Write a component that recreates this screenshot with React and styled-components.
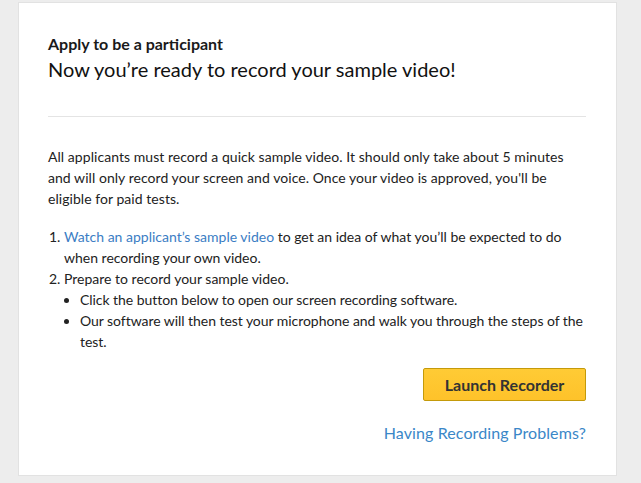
import styled, { createGlobalStyle } from "styled-components";

const GlobalStyle = createGlobalStyle`
  body {
    margin: 0;
    background: #ededed;
    font-family: Lato, "Liberation Sans", sans-serif;
    color: #222;
  }
`;

const Card = styled.div`
  box-sizing: border-box;
  width: 599px;
  height: 474px;
  margin: 2px 0 0 18px;
  padding: 31px 30px 0 29px;
  background: #fff;
  border: 1px solid #e2e2e2;
`;

const Eyebrow = styled.div`
  font-size: 16px;
  font-weight: 700;
  line-height: 20px;
  color: #1a1a1a;
`;

const Heading = styled.h1`
  margin: 1px 0 0;
  font-size: 20px;
  font-weight: 400;
  line-height: 28px;
  color: #111;
`;

const Divider = styled.hr`
  margin: 33px 0 0;
  border: none;
  border-top: 1px solid #e4e4e4;
`;

const Para = styled.p`
  margin: 29px 0 0;
  font-size: 14px;
  line-height: 21px;
  letter-spacing: 0.05px;
`;

const Steps = styled.ol`
  margin: 17px 0 0;
  padding-left: 16px;
  font-size: 14px;
  line-height: 21px;
`;

const Bullets = styled.ul`
  margin: 0;
  padding-left: 16px;
  list-style: disc;
  letter-spacing: -0.05px;
`;

const Link = styled.a`
  color: #3b7dc4;
  text-decoration: none;
`;

const Actions = styled.div`
  display: flex;
  flex-direction: column;
  align-items: flex-end;
  margin-top: 16px;
`;

const LaunchButton = styled.button`
  box-sizing: border-box;
  width: 163px;
  height: 33px;
  border: 1px solid #c49a0a;
  border-radius: 2px;
  background: linear-gradient(#ffcb35, #fec22a);
  color: #333;
  font-family: inherit;
  font-size: 16px;
  font-weight: 700;
  cursor: pointer;
`;

const HelpLink = styled(Link)`
  margin-top: 22px;
  font-size: 16px;
  line-height: 20px;
  letter-spacing: 0.1px;
  color: #3a87c8;
`;

export default function App() {
  return (
    <>
      <GlobalStyle />
      <Card>
        <Eyebrow>Apply to be a participant</Eyebrow>
        <Heading>Now you’re ready to record your sample video!</Heading>
        <Divider />
        <Para>
          All applicants must record a quick sample video. It should only take
          about 5 minutes and will only record your screen and voice. Once your
          video is approved, you'll be eligible for paid tests.
        </Para>
        <Steps>
          <li>
            <Link href="#">Watch an applicant’s sample video</Link> to get an
            idea of what you’ll be expected to do when recording your own video.
          </li>
          <li>
            Prepare to record your sample video.
            <Bullets>
              <li>
                Click the button below to open our screen recording software.
              </li>
              <li>
                Our software will then test your microphone and walk you through
                the steps of the test.
              </li>
            </Bullets>
          </li>
        </Steps>
        <Actions>
          <LaunchButton>Launch Recorder</LaunchButton>
          <HelpLink href="#">Having Recording Problems?</HelpLink>
        </Actions>
      </Card>
    </>
  );
}
